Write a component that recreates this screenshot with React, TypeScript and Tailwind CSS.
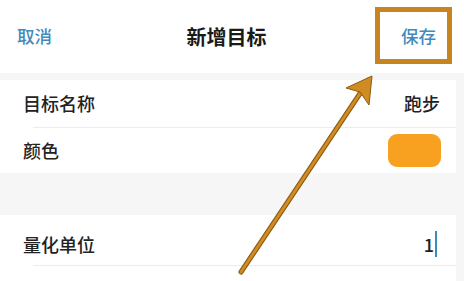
import React from "react";

const font = { fontFamily: '"Noto Sans CJK SC", "Noto Sans", sans-serif' };

function Row({ label, children, className = "" }: { label: string; children?: React.ReactNode; className?: string }) {
  return (
    <div className={"flex items-center justify-between pl-[23px] pr-[16px] " + className}>
      <span className="text-[18px] font-medium text-[#222]">{label}</span>
      {children}
    </div>
  );
}

export default function App() {
  return (
    <div className="relative w-[464px] h-[281px] overflow-hidden bg-[#f6f6f7]" style={font}>
      {/* nav bar */}
      <div className="h-[73px] bg-white flex items-center justify-between pl-[17px] pr-[28px]">
        <span className="text-[17.5px] font-medium text-[#3f8bbd]">取消</span>
        <span className="text-[20px] font-bold text-[#1a1a1a]">新增目标</span>
        <span className="text-[17.5px] font-medium text-[#3f8bbd]">保存</span>
      </div>

      <div className="h-[7px]" />

      {/* card 1 */}
      <div className="bg-white mr-[8px]">
        <Row label="目标名称" className="h-[47px]">
          <span className="text-[18px] font-medium text-[#222]">跑步</span>
        </Row>
        <div className="ml-[33px] h-px bg-[#ececec]" />
        <Row label="颜色" className="h-[45px]">
          <div className="w-[53px] h-[33px] rounded-[9px] bg-[#f8a020] mr-[-1px]" />
        </Row>
      </div>

      <div className="h-[42px]" />

      {/* card 2 */}
      <div className="bg-white mr-[8px]">
        <Row label="量化单位" className="h-[50px] pt-[8px]">
          <span className="flex items-center text-[18px] font-medium text-[#222] mr-[3px]">
            1<span className="ml-[1px] w-[2px] h-[26px] bg-[#3f8bbd]" />
          </span>
        </Row>
        <div className="ml-[33px] h-px bg-[#ececec]" />
        <div className="h-[40px]" />
      </div>

      {/* annotation: box around save */}
      <div className="absolute left-[375px] top-[7px] w-[77px] h-[57px] border-[5px] border-[#c7841f]" />

      {/* annotation: arrow */}
      <svg className="absolute left-0 top-0" width="464" height="281" viewBox="0 0 464 281">
        <line x1="241" y1="272" x2="369" y2="80" stroke="#8a5a12" strokeWidth="5" strokeLinecap="round" />
        <line x1="241" y1="272" x2="369" y2="80" stroke="#d08c22" strokeWidth="3" strokeLinecap="round" />
        <path d="M372 76 L346 88 L360 92 L369 105 Z" fill="#d08c22" stroke="#8a5a12" strokeWidth="1" strokeLinejoin="round" />
      </svg>
    </div>
  );
}
